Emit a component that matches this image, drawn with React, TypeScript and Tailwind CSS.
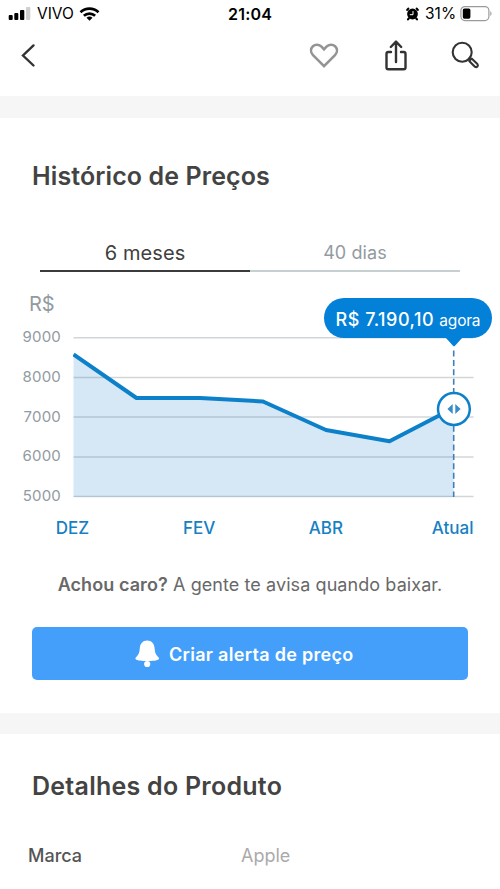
import { useState } from "react";

interface PricePoint {
  x: number;
  y: number;
}

// Escala del gráfico
const axisLabels = ["9000", "8000", "7000", "6000", "5000"];
const gridLines = [337.7, 377.5, 417, 457, 496.5];
const months = ["DEZ", "FEV", "ABR", "Atual"];

const points: PricePoint[] = [
  { x: 73.5, y: 354.5 },
  { x: 136.5, y: 398 },
  { x: 200, y: 398 },
  { x: 263, y: 401.5 },
  { x: 326, y: 430 },
  { x: 389.5, y: 441.3 },
  { x: 453.7, y: 408 },
];

function StatusBar() {
  return (
    <div className="flex h-7 w-full items-center text-black">
      <svg className="ml-2 h-4 w-6" viewBox="0 0 24 16">
        <rect x="0.7" y="9" width="4" height="5" rx="1" />
        <rect x="6.3" y="7" width="4" height="7" rx="1" />
        <rect x="12" y="4" width="4.3" height="10" rx="1" />
        <rect x="18" y="1" width="4.3" height="13" rx="1" fill="#cfcfcf" />
      </svg>
      <span className="ml-[5px] w-[38px] whitespace-nowrap text-[15.500px]">VIVO</span>
      <svg className="ml-1 h-4 w-[22px]" viewBox="0 0 22 16" fill="none" stroke="black" strokeWidth="2.7">
        <path d="M1.5 6.2a13.3 13.3 0 0 1 18 0" />
        <path d="M4.9 9.8a8.2 8.2 0 0 1 11.2 0" />
        <path d="M10.5 14.8l-3-3a4.4 4.4 0 0 1 6 0z" fill="black" stroke="none" />
      </svg>
      <span className="ml-[127px] w-[46px] whitespace-nowrap text-base font-semibold tracking-[0.2px]">21:04</span>
      <svg className="ml-[131px] h-[15px] w-[15px]" viewBox="0 0 15 15">
        <circle cx="7.5" cy="7" r="5.4" />
        <path d="M3.3 1.6L2.2 2.9M11.7 1.6l1.1 1.3M3.8 11.400l-.8 1M11.200 11.400l.8 1" stroke="black" strokeWidth="2.200" strokeLinecap="round" />
        <path d="M8 4.100v3.600H4.800" fill="none" stroke="white" strokeWidth="1" />
      </svg>
      <span className="ml-[5px] w-[34px] whitespace-nowrap text-[15.5px]">31%</span>
      <svg className="ml-[1px] h-[17px] w-[33px]" viewBox="0 0 33 17">
        <rect x="0.9" y="0.6" width="28" height="14" rx="4" fill="none" stroke="#9b9b9b" strokeWidth="1.2" />
        <rect x="2.8" y="2.5" width="7.6" height="10.2" rx="1.6" />
        <path d="M30.3 5.300c1.6.6 1.6 4 0 4.6z" fill="#9b9b9b" />
      </svg>
    </div>
  );
}

function NavBar() {
  return (
    <nav className="flex h-[68px] w-full items-start pt-2">
      <svg className="ml-[18px] h-10 w-5" viewBox="0 0 20 40" fill="none" stroke="#333" strokeWidth="2.4" strokeLinecap="round">
        <path d="M15.500 9.400L5 19.500l10.500 10" />
      </svg>
      <svg className="ml-[266px] h-10 w-10" viewBox="304 36 40 40" fill="none" stroke="#949494" strokeWidth="2.6" strokeLinejoin="miter">
        <path d="M324 66.2L313 55.2c-2.6-2.8-2.5-6.6-.1-8.9 2.5-2.3 6.3-2 8.6.4L324 49.4l2.5-2.7c2.3-2.4 6.1-2.7 8.6-.4 2.4 2.3 2.5 6.1-.1 8.9z" />
      </svg>
      <svg className="ml-8 h-10 w-10" viewBox="376 36 40 40" fill="none" stroke="#333" strokeWidth="2.4" strokeLinecap="round" strokeLinejoin="round">
        <path d="M391 52h-2.7q-1.8 0-1.8 1.8v13.6q0 1.8 1.8 1.8h15.4q1.8 0 1.8-1.8V53.8q0-1.8-1.8-1.8H401" />
        <path d="M396 62V41.8M390.8 47l5.2-5.4 5.2 5.4" />
      </svg>
      <svg className="ml-7 h-10 w-10" viewBox="444 36 40 40" fill="none" stroke="#333">
        <circle cx="462.2" cy="52.2" r="9.5" strokeWidth="2.1" />
        <path d="M468.4 59.2l1.700-1.600" strokeWidth="2.2" />
        <path d="M469.2 60.900l2.400-2.300 5.800 5.500q1 1.100 0 2.400-1.200 1.200-2.500.2z" strokeWidth="2.1" strokeLinejoin="round" />
      </svg>
    </nav>
  );
}

function PriceChart() {
  const line = points.map((p) => `${p.x},${p.y}`).join(" ");

  return (
    <div className="relative">
      <div className="flex h-7 items-center pl-[29px] text-[20px] text-[#929b9f]">R$</div>
      <div className="mt-[9px] flex h-[179px]">
        <div className="flex w-[61px] flex-col justify-between text-right text-[15px] tracking-[0.200px] text-[#929b9f]">
          {axisLabels.map((label) => (
            <span key={label} className="h-5 leading-5">{label}</span>
          ))}
        </div>
        <svg className="ml-3 h-[179px] w-[427px]" viewBox="73 327 427 179" fill="none">
          {gridLines.map((y) => (
            <path key={y} d={`M73.5 ${y}H473.5`} stroke="#d3d6d8" strokeWidth="1.4" />
          ))}
          <polygon points={`${line} 453.7,497 73.5,497`} fill="#0a75c2" fillOpacity="0.17" />
          <polyline points={line} stroke="#0d80ca" strokeWidth="4" strokeLinejoin="round" />
          <path d="M453.7 350.5V497" stroke="#3e7fbd" strokeWidth="1.6" strokeDasharray="6 3.4" />
          <circle cx="453.9" cy="409" r="15.900" fill="white" stroke="#0d80ca" strokeWidth="2.5" />
          <path d="M452.700 404v10l-5.300-5zM455.300 404v10l5.300-5z" fill="#3a8cc9" />
        </svg>
      </div>

      {/* Globo con el precio actual */}
      <div className="absolute left-[324px] top-[8px] flex h-10 w-[168px] items-center justify-center rounded-full bg-[#0380d8] pt-[3px] text-white">
        <span className="whitespace-nowrap text-[18px] font-medium tracking-[0.500px]">
          R$ 7.190,10 <span className="text-[15.500px] font-normal tracking-[-0.200px]">agora</span>
        </span>
        <svg className="absolute left-[121px] top-[39px] h-[11px] w-[18px]" viewBox="0 0 18 11">
          <path d="M0 0h18L10 8.7q-1 1-2 0z" fill="#0380d8" />
        </svg>
      </div>

      <div className="ml-[9px] mt-[9px] grid h-6 w-[507px] grid-cols-4 items-center pt-[1px] text-center text-[17px] font-medium text-[#1680c3]">
        {months.map((month) => (
          <span key={month}>{month}</span>
        ))}
      </div>
    </div>
  );
}

export default function App() {
  const [tab, setTab] = useState("6 meses");

  return (
    <main className="h-[889px] w-[500px] overflow-hidden bg-white font-['Inter',sans-serif]">
      <StatusBar />
      <NavBar />
      <div className="h-[22px] bg-[#f6f6f6]" />

      <section className="h-[595px] pt-[43px]">
        <h1 className="ml-8 whitespace-nowrap text-[25px] font-semibold leading-[30px] tracking-[0.1px] text-[#434343]">Histórico de Preços</h1>
        <div className="mx-10 mt-11 grid grid-cols-2">
          {["6 meses", "40 dias"].map((item) => (
            <button
              key={item}
              onClick={() => setTab(item)}
              className={
                tab === item
                  ? "h-[37px] border-b-2 border-[#3b3b3b] text-[20px] tracking-[0.100px] text-[#404040]"
                  : "h-[37px] border-b-2 border-[#c7d0d1] text-[18px] tracking-[0.100px] text-[#929b9f]"
              }
            >
              {item}
            </button>
          ))}
        </div>
        <div className="mt-[18px]">
          <PriceChart />
        </div>
        <p className="mt-[34px] whitespace-nowrap text-center text-[18px] leading-6 tracking-[0.08px] text-[#686868]">
          <b className="font-semibold">Achou caro?</b> A gente te avisa quando baixar.
        </p>
        <button className="mx-8 mt-[30px] flex h-[53px] w-[436px] items-center rounded-[5px] bg-[#449ffb] pl-[103px] text-[18px] font-semibold text-white">
          <svg className="h-7 w-6" viewBox="0 0 24 28" fill="white">
            <path d="M12.2.5c4.6 0 7 3.2 7.4 7.7.3 4.1 1 6.4 3.3 8.5 1.2 1.2 1.4 1.8.8 2.5C22.3 20.5 17.5 21 12.2 21S2.1 20.5.7 19.2c-.6-.7-.4-1.3.8-2.5 2.3-2.1 3-4.4 3.3-8.5C5.2 3.7 7.6.5 12.2.5z" />
            <circle cx="12.2" cy="24" r="3.1" />
          </svg>
          <span className="ml-[10px] whitespace-nowrap pt-[1px] tracking-[0.3px]">Criar alerta de preço</span>
        </button>
      </section>

      <div className="h-[21px] bg-[#f6f6f6]" />

      <section className="pt-[37px]">
        <h2 className="ml-8 whitespace-nowrap text-[25px] font-semibold leading-[30px] tracking-[0.25px] text-[#434343]">Detalhes do Produto</h2>
        <div className="mt-[43px] flex pl-7 text-[18px] leading-6">
          <span className="w-[213px] font-medium text-[#555]">Marca</span>
          <span className="text-[#aaa]">Apple</span>
        </div>
      </section>
    </main>
  );
}
